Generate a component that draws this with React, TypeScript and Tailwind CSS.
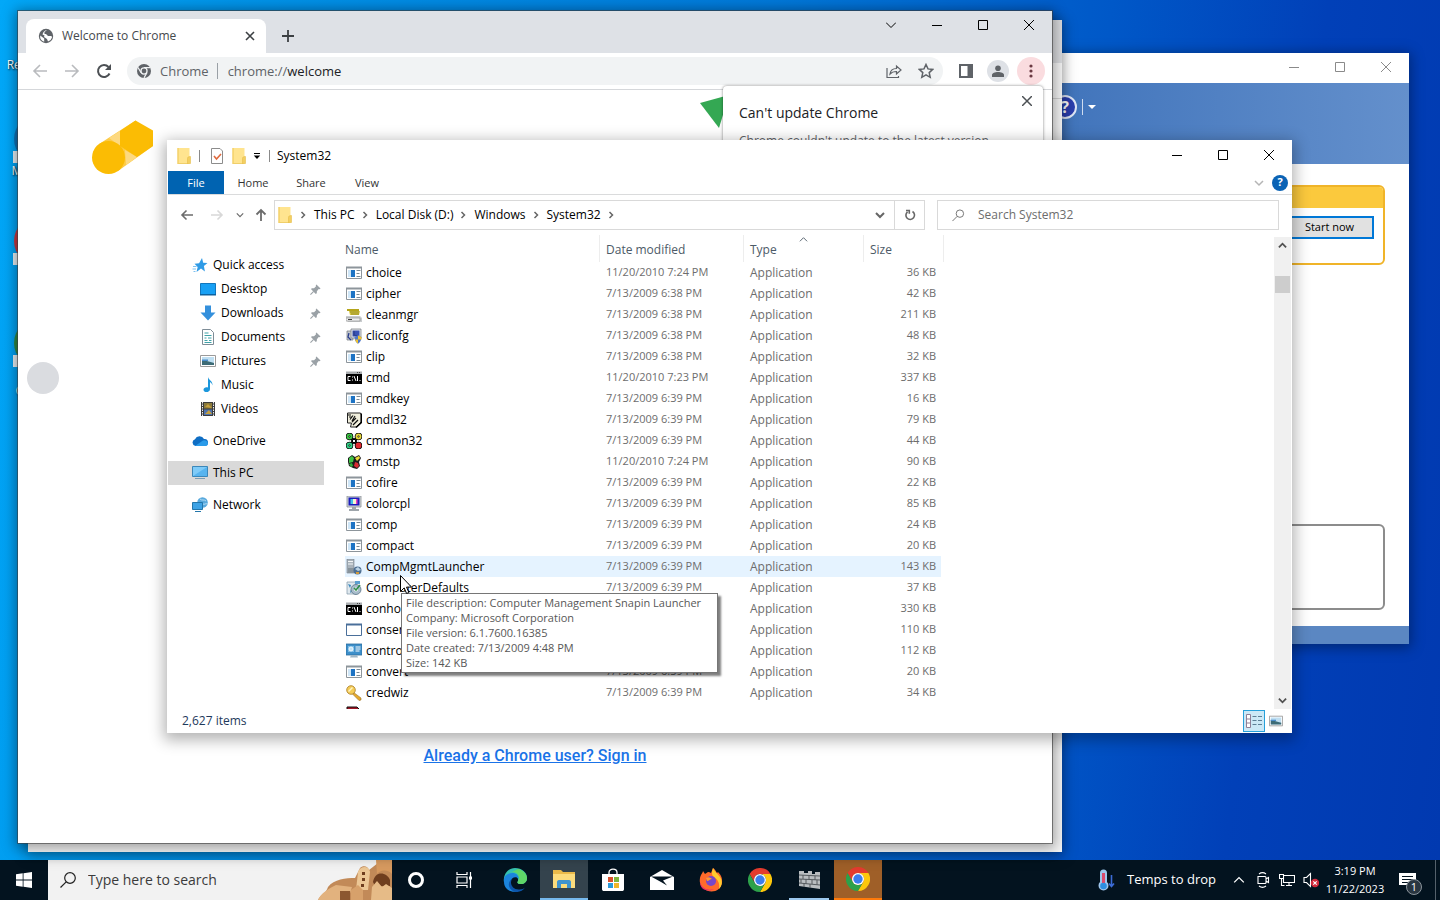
import React from 'react'

const ChromeLogo = ({ className }: { className?: string }) => (
  <svg viewBox="0 0 24 24" className={className}>
    <path d="M1.6 6A12 12 0 0 1 22.4 6H12A6 6 0 0 0 6.8 15Z" fill="#e33b2e" />
    <path d="M22.4 6A12 12 0 0 1 12 24L17.2 15A6 6 0 0 0 12 6Z" fill="#fdc70c" />
    <path d="M12 24A12 12 0 0 1 1.6 6L6.8 15A6 6 0 0 0 17.2 15Z" fill="#2da14a" />
    <circle cx="12" cy="12" r="6" fill="#fff" />
    <circle cx="12" cy="12" r="4.7" fill="#3b7ded" />
  </svg>
)

const ChromeGray = () => (
  <svg viewBox="0 0 24 24" className="size-[14px]">
    <circle cx="12" cy="12" r="12" fill="#5f6368" />
    <path d="M12 6.3H22.6M6.9 14.8L1.8 6M17.1 14.8L12 23.8" stroke="#f1f3f4" strokeWidth="2" />
    <circle cx="12" cy="12" r="5.2" fill="#5f6368" stroke="#f1f3f4" strokeWidth="2.2" />
  </svg>
)

const Folder = ({ className = 'size-4' }: { className?: string }) => (
  <svg viewBox="0 0 16 16" className={className}>
    <path d="M1.500 0h12v16h-12z" fill="#ffe48f" />
    <path d="M2 0v16" stroke="#eec756" />
    <path d="M2 15.500h10" stroke="#f0cf6a" />
    <path d="M11.500 10.500c0-1.500 1-2 3-2V15.500h-3z" fill="#f3cf62" stroke="#e3b63d" strokeWidth=".5" />
  </svg>
)

const Minimize = () => <svg viewBox="0 0 10 10" className="size-[10px]" stroke="currentColor"><path d="M0 5.500h10" /></svg>
const Maximize = () => <svg viewBox="0 0 10 10" className="size-[10px]" stroke="currentColor" fill="none"><path d="M.5.5h9v9h-9z" /></svg>
const Close = () => <svg viewBox="0 0 10 10" className="size-[10px]" stroke="currentColor"><path d="M0 0l10 10M10 0L0 10" /></svg>

const WindowButtons = ({ className = '', chevron = false }: { className?: string; chevron?: boolean }) => (
  <div className={`flex ${className}`}>
    {chevron && (
      <button aria-label="Search tabs" className="flex w-[46px] items-center justify-center">
        <svg viewBox="0 0 10 10" className="size-[10px]" stroke="currentColor" fill="none"><path d="M0 2.500l5 5 5-5" /></svg>
      </button>
    )}
    <button aria-label="Minimize" className="flex w-[46px] items-center justify-center"><Minimize /></button>
    <button aria-label="Maximize" className="flex w-[46px] items-center justify-center"><Maximize /></button>
    <button aria-label="Close" className="flex w-[46px] items-center justify-center"><Close /></button>
  </div>
)

const Chevron = ({ d, className = 'size-[10px]', width = 1.5 }: { d: string; className?: string; width?: number }) => (
  <svg viewBox="0 0 10 10" className={className} fill="none" stroke="currentColor" strokeWidth={width}><path d={d} /></svg>
)
const DOWN = 'M1 3l4 4 4-4'
const UP = 'M1 7l4-4 4 4'
const RIGHT = 'M3.500 2l3 3-3 3'

/* ---------- file list icons ---------- */

const icons: Record<string, React.ReactNode> = {
  app: (
    <>
      <path d="M.5 2.500h15v11H.5z" fill="#fff" stroke="#8d959b" />
      <path d="M0 1.500h16V3.500H0z" fill="#8d959b" />
      <path d="M2 5h7v7H2z" fill="#cfe6f7" />
      <path d="M5 5h4v7H5z" fill="#1d73c4" />
      <path d="M10.500 5.500h4M10.500 8.500h3M10.500 11.500h4" stroke="#7a8a95" />
    </>
  ),
  blank: (
    <>
      <path d="M.5 2.500h15v11H.5z" fill="#fff" stroke="#4a6f9a" />
      <path d="M0 1.500h16V3.500H0z" fill="#4a6f9a" />
    </>
  ),
  cmd: (
    <>
      <path d="M0 2h16v12H0z" fill="#000" />
      <path d="M0 1.500h16V4H0z" fill="#a9adb0" />
      <path d="M11 2.500h1M13 2.500h1" stroke="#444" />
      <path d="M4.500 6.500H2v4h2.500M6.500 6.500v1M6.500 9.500v1M8 6l2 5M11.500 6v5M13.500 10.500h1" stroke="#fff" fill="none" />
    </>
  ),
  clean: (
    <>
      <path d="M1 2h12v2H1z" fill="#b5a51c" />
      <path d="M3 4l1 4h9l1-4z" fill="#d8c840" />
      <path d="M4 5h9M5 7h8" stroke="#77701a" strokeWidth=".7" />
      <path d="M0 9h14l2 2v4H2l-2-2z" fill="#c9ccce" />
      <path d="M0 11h14v3H0z" fill="#eef0f1" stroke="#888" strokeWidth=".6" />
      <path d="M2 12.500h4" stroke="#444" />
    </>
  ),
  config: (
    <>
      <path d="M1 3h6v9H1z" fill="#c8ccd2" stroke="#70757d" strokeWidth=".7" />
      <path d="M5 1h10v9H5z" fill="#e2e5ea" stroke="#70757d" strokeWidth=".7" />
      <path d="M6.500 2.500h7v6h-7z" fill="#3852b4" />
      <path d="M3 5l-1 4 3 3M8 3v4l3 1" fill="none" stroke="#2b3f8d" strokeWidth="1.300" />
      <path d="M8.500 9l3.500-1.500L15.500 9c0 3.500-1.300 5-3.500 6.700C9.800 14 8.500 12.500 8.500 9z" fill="#4f78c9" />
      <path d="M12 7.500l3.500 1.500v2.500H12zM12 15.700v-4.200H9c.6 2 1.600 3 3 4.200z" fill="#f0c22f" />
    </>
  ),
  script: (
    <>
      <path d="M1.500 1h13l.5 2v7l-5 5H4.500l1-4h-4z" fill="#f1efdd" stroke="#222" />
      <path d="M2 3h3M3 5h3M7 3.500l-3 4M9 4L6 9M10 6l-4 4M12 8l-4 4M7 13l2-2" stroke="#111" strokeWidth="1.200" />
      <path d="M15.500 1.500v9L10 15.500" fill="none" stroke="#000" strokeWidth="1.500" />
    </>
  ),
  clover: (
    <>
      <path d="M5 5h6v6H5z" fill="#222" />
      <circle cx="3.500" cy="3.500" r="2.100" fill="none" stroke="#000" strokeWidth="3.400" />
      <circle cx="12.500" cy="3.500" r="2.100" fill="none" stroke="#000" strokeWidth="3.400" />
      <circle cx="3.500" cy="12.500" r="2.100" fill="none" stroke="#000" strokeWidth="3.400" />
      <circle cx="12.500" cy="12.500" r="2.100" fill="none" stroke="#000" strokeWidth="3.400" />
      <circle cx="3.500" cy="3.500" r="2" fill="none" stroke="#3fc447" strokeWidth="2" />
      <circle cx="12.500" cy="3.500" r="2" fill="none" stroke="#e6d63e" strokeWidth="2" />
      <circle cx="3.500" cy="12.500" r="2" fill="none" stroke="#34cf87" strokeWidth="2" />
      <circle cx="12.500" cy="12.500" r="2.200" fill="#e02a30" stroke="#e02a30" strokeWidth="1.500" />
      <path d="M6.500 6.500h3v3h-3z" fill="#fff" stroke="#000" />
    </>
  ),
  profile: (
    <>
      <path d="M2 4l4-3 3 2 4-2 2 3-2 4 1 4-3 3-4-1-4-2-1-4z" fill="#1c1c1c" />
      <path d="M3 4l3-2 2 2-1 4-4 1z" fill="#3fc447" />
      <path d="M9 4l4-2 1 2-3 3z" fill="#ecd83c" />
      <path d="M3 10l3-1 1 3-2 1z" fill="#2fae3a" />
      <path d="M9 8l3 1 1 3-2 2-3-2z" fill="#d92b32" />
    </>
  ),
  color: (
    <>
      <path d="M1 0h14v11H1z" fill="#d3d7db" stroke="#8a8f94" strokeWidth=".8" />
      <path d="M2.500 1.500h11v8h-11z" fill="#1c1dbb" />
      <path d="M4.500 3h2.500v5H4.500z" fill="#44c0e8" />
      <path d="M7 3h3v5H7z" fill="#f5f5d0" />
      <path d="M10 3h1.500v5H10z" fill="#e540c5" />
      <path d="M6 11h4v2h3v2H3v-2h3z" fill="#9ea5ab" />
    </>
  ),
  server: (
    <>
      <path d="M1 0h7v14H1z" fill="#a9b3bb" stroke="#727d86" strokeWidth=".6" />
      <path d="M2 2.500h5M2 5h5" stroke="#f4f6f7" strokeWidth="1.200" />
      <path d="M2 9h9v5H2z" fill="#88939b" />
      <circle cx="11.500" cy="11.500" r="4" fill="#4d6f92" />
      <path d="M9 10l3-2 3 3-3 1z" fill="#b9d1e4" />
      <path d="M10 13h3v2h-3z" fill="#d39a3a" />
    </>
  ),
  defaults: (
    <>
      <path d="M1 2h9v12H1z" fill="#dfe8ee" stroke="#7f95a6" strokeWidth=".7" />
      <path d="M2 4l3 1-1 3zM5 9l2 2-3 2z" fill="#3986bd" />
      <circle cx="10" cy="9.500" r="5" fill="#a8bccb" stroke="#5b7488" strokeWidth=".8" />
      <circle cx="10" cy="9.500" r="2" fill="#fff" />
      <path d="M8 8l2 2 4-5" stroke="#2f8f4a" strokeWidth="1.600" fill="none" />
      <path d="M9 1h5v3H9z" fill="#5a9fd0" />
    </>
  ),
  control: (
    <>
      <path d="M0 1h16v11H0z" fill="#3d8fca" stroke="#2b6c9e" strokeWidth=".8" />
      <path d="M2 3h6v6H2z" fill="#7dbce6" />
      <circle cx="5" cy="6" r="2" fill="#c4e4f7" stroke="#fff" strokeWidth=".8" />
      <path d="M9.500 4h5M9.500 6h5M9.500 8h4" stroke="#fff" />
      <path d="M5 12h6l1 2.500H4z" fill="#9fb6c6" />
    </>
  ),
  key: (
    <>
      <path d="M7 7l8 6v2l-2 .5-7-7z" fill="#e5a92c" stroke="#9c7327" strokeWidth=".6" />
      <circle cx="5" cy="5" r="4.300" fill="#f4cc57" stroke="#a87b24" strokeWidth=".8" />
      <path d="M2.500 6.500l4-4" stroke="#fff3c4" strokeWidth="1.500" />
    </>
  ),
  red: <path d="M1 1h10l3 3v3H1z" fill="#a01524" stroke="#111" />,
}

const files: [string, string, string, string][] = [
  ['app', 'choice', '11/20/2010 7:24 PM', '36 KB'],
  ['app', 'cipher', '7/13/2009 6:38 PM', '42 KB'],
  ['clean', 'cleanmgr', '7/13/2009 6:38 PM', '211 KB'],
  ['config', 'cliconfg', '7/13/2009 6:38 PM', '48 KB'],
  ['app', 'clip', '7/13/2009 6:38 PM', '32 KB'],
  ['cmd', 'cmd', '11/20/2010 7:23 PM', '337 KB'],
  ['app', 'cmdkey', '7/13/2009 6:39 PM', '16 KB'],
  ['script', 'cmdl32', '7/13/2009 6:39 PM', '79 KB'],
  ['clover', 'cmmon32', '7/13/2009 6:39 PM', '44 KB'],
  ['profile', 'cmstp', '11/20/2010 7:24 PM', '90 KB'],
  ['app', 'cofire', '7/13/2009 6:39 PM', '22 KB'],
  ['color', 'colorcpl', '7/13/2009 6:39 PM', '85 KB'],
  ['app', 'comp', '7/13/2009 6:39 PM', '24 KB'],
  ['app', 'compact', '7/13/2009 6:39 PM', '20 KB'],
  ['server', 'CompMgmtLauncher', '7/13/2009 6:39 PM', '143 KB'],
  ['defaults', 'ComputerDefaults', '7/13/2009 6:39 PM', '37 KB'],
  ['cmd', 'conhost', '7/13/2009 6:39 PM', '330 KB'],
  ['blank', 'consent', '7/13/2009 6:39 PM', '110 KB'],
  ['control', 'control', '7/13/2009 6:39 PM', '112 KB'],
  ['app', 'convert', '7/13/2009 6:39 PM', '20 KB'],
  ['key', 'credwiz', '7/13/2009 6:39 PM', '34 KB'],
]

/* ---------- navigation pane ---------- */

const navIcons: Record<string, React.ReactNode> = {
  star: (
    <>
      <path d="M10 1l1.200 4.800 4.300.2-3.600 3 1 5.500L9 11.500 4.500 15l1.200-5L2.500 6.800l4.600-.5z" fill="#2f9be6" />
      <path d="M1 9.500h3.500M.5 12h3.500M1.500 14.500h2" stroke="#7cc1f0" />
    </>
  ),
  desktop: (
    <>
      <path d="M.5 2.500h15v11H.5z" fill="#18a0f4" stroke="#1277bd" />
      <path d="M0 13h16v1.500H0z" fill="#0e629f" />
    </>
  ),
  down: <path d="M5 .5h6v7h4.500L8 15.500 .5 7.500H5z" fill="#3490dc" />,
  doc: (
    <>
      <path d="M2.500.5h8l3 3v12h-11z" fill="#fff" stroke="#7e8d97" />
      <path d="M4.500 4h4M4.500 6.500h7M4.500 9h2M8 9h3.500M4.500 11.500h3M9 11.500h2.500M4.500 13.500h7" stroke="#3fa2a8" />
    </>
  ),
  pic: (
    <>
      <path d="M.5 2.500h15v11H.5z" fill="#fff" stroke="#9a9a9a" />
      <path d="M2 4h12v8H2z" fill="#bfdff2" />
      <path d="M2 7c4 0 7 2 12 3v2H2z" fill="#3d6b76" />
      <path d="M2 6.500h6v1.500H2z" fill="#4b8ccb" />
    </>
  ),
  music: <path d="M8 0c.5 3 5 4 4.500 8.500-.5-2-1.500-3-2.500-3.200V12c0 4-6.500 4-6.500.8 0-2.300 2.500-3 4.500-2.300z" fill="#1c97dc" />,
  video: (
    <>
      <path d="M1 1h14v14H1z" fill="#3c3c3c" />
      <path d="M2.500 1v14M13.500 1v14" stroke="#eee" strokeDasharray="1.500 1" />
      <path d="M4 2h8v5.500H4z" fill="#8a7a3c" />
      <path d="M4 8.500h8V14H4z" fill="#5073ad" />
      <path d="M5 6l3-3 4 4zM5 13l4-4 3 4z" fill="#c6a03e" />
    </>
  ),
  cloud: (
    <>
      <path d="M3.500 13A3.500 3.500 0 0 1 3 6.200 5 5 0 0 1 12 6a3.500 3.500 0 0 1 1 7z" fill="#0f6ec4" />
      <path d="M3 13l8-5.500a3.500 3.500 0 0 1 5 3c0 1.500-1.200 2.500-2.500 2.500z" fill="#2a9bea" />
    </>
  ),
  pc: (
    <>
      <path d="M.5 1.500h15v10H.5z" fill="#57b4ef" stroke="#3b87b9" />
      <path d="M1 2h14l-14 9z" fill="#7fcbf8" />
      <path d="M3 13.500h10" stroke="#7b9db3" />
    </>
  ),
  network: (
    <>
      <circle cx="10.500" cy="5.500" r="5.300" fill="#58a9dd" />
      <path d="M8 2c2 2 4 0 6 2M11 7c1.500 1 2.500-1 4.500 0" stroke="#b5dcf4" fill="none" />
      <path d="M.5 5.500h10v7H.5z" fill="#3da3e6" stroke="#2376aa" />
      <path d="M3 14.500h6" stroke="#2376aa" />
    </>
  ),
}

const quickItems = [
  { icon: 'desktop', label: 'Desktop', pinned: true },
  { icon: 'down', label: 'Downloads', pinned: true },
  { icon: 'doc', label: 'Documents', pinned: true },
  { icon: 'pic', label: 'Pictures', pinned: true },
  { icon: 'music', label: 'Music', pinned: false },
  { icon: 'video', label: 'Videos', pinned: false },
]

const NavItem = ({ icon, label, sub = false, pinned = false, className = '' }: { icon: string; label: string; sub?: boolean; pinned?: boolean; className?: string }) => (
  <a href="#" className={`flex h-6 items-center gap-[5px] pr-[3px] ${sub ? 'pl-8' : 'pl-6'} ${className}`}>
    <svg viewBox="0 0 16 16" className="size-4 shrink-0">{navIcons[icon]}</svg>
    <span className="flex-1">{label}</span>
    {pinned && (
      <svg viewBox="0 0 12 12" className="size-[11px] text-[#9aa1a6]">
        <path d="M7 .5L11.500 5l-1 .7-1-.2L7.500 7.800 7.400 10 6.300 11 1 5.500l1.200-1 2.200 0L6.600 2.400 6.300 1.300z" fill="currentColor" />
        <path d="M4 8L.5 11.500" stroke="currentColor" strokeWidth="1.200" />
      </svg>
    )}
  </a>
)

const Explorer = () => (
  <section className="absolute top-[140px] right-[148px] bottom-[127px] left-[167px] flex flex-col bg-white pl-px text-xs text-black shadow-[0_4px_14px_3px_rgba(0,0,0,0.3)]">
    <header className="flex h-[31px] shrink-0 justify-between">
      <div className="flex items-center pl-2">
        <Folder />
        <span className="mx-[7px] h-3 w-px bg-[#8a8a8a]" />
        <svg viewBox="0 0 16 16" className="ml-[2px] size-4">
          <path d="M2.500.5h8.500l2.500 2.500v12.500h-11z" fill="#fff" stroke="#8c8c8c" />
          <path d="M5 8l2.500 3L12 6" fill="none" stroke="#e06a3e" strokeWidth="1.600" />
        </svg>
        <Folder className="ml-[6px] size-4" />
        <svg viewBox="0 0 8 8" className="mx-[6px] size-2"><path d="M1 1.500h6" stroke="#000" /><path d="M.8 3.500h6.400L4 7z" fill="#000" /></svg>
        <span className="mr-[7px] ml-[2px] h-3 w-px bg-[#8a8a8a]" />
        <h1>System32</h1>
      </div>
      <WindowButtons className="h-[30px]" />
    </header>

    <nav className="flex h-6 shrink-0 border-b border-[#dadbdc] text-[11px] text-[#333]">
      <button className="w-14 bg-[#0063b1] pt-px text-white">File</button>
      <button className="w-[58px] pt-px">Home</button>
      <button className="w-[58px] pt-px">Share</button>
      <button className="w-[54px] pt-px">View</button>
      <div className="ml-auto flex items-center gap-2 pr-1">
        <button aria-label="Expand the Ribbon" className="text-[#b5b5b5]"><Chevron d={DOWN} /></button>
        <button aria-label="Help" className="flex size-4 items-center justify-center rounded-full bg-[#0b63b5] font-bold text-white">?</button>
      </div>
    </nav>

    <div className="flex h-10 shrink-0 items-center pr-[13px]">
      <div className="flex w-[106px] items-center justify-between pr-[6px] pl-3 text-[#6c6c6c]">
        <button aria-label="Back"><svg viewBox="0 0 14 14" className="size-[14px]" fill="none" stroke="currentColor" strokeWidth="1.600"><path d="M13 7H2M6.500 2.500L2 7l4.500 4.500" /></svg></button>
        <button aria-label="Forward" className="ml-[14px] text-[#d8d8d8]"><svg viewBox="0 0 14 14" className="size-[14px]" fill="none" stroke="currentColor" strokeWidth="1.600"><path d="M1 7h11M7.500 2.500L12 7l-4.500 4.500" /></svg></button>
        <button aria-label="Recent locations" className="ml-[10px]"><Chevron d={DOWN} className="size-2" /></button>
        <button aria-label="Up" className="ml-[8px]"><svg viewBox="0 0 14 14" className="size-[14px]" fill="none" stroke="currentColor" strokeWidth="1.800"><path d="M7 13V2M2.500 6.500L7 2l4.500 4.500" /></svg></button>
      </div>
      <div className="flex h-[30px] flex-1 items-center border border-[#d9d9d9] pl-[2px]">
        <Folder />
        {['This PC', 'Local Disk (D:)', 'Windows', 'System32'].map((part) => (
          <React.Fragment key={part}>
            <span className="w-[21px] pl-[5px] text-[#666]"><Chevron d={RIGHT} /></span>
            <a href="#">{part}</a>
          </React.Fragment>
        ))}
        <span className="w-[21px] pl-[5px] text-[#666]"><Chevron d={RIGHT} /></span>
        <button aria-label="Previous locations" className="ml-auto flex h-full w-7 items-center justify-center text-[#666]"><Chevron d={DOWN} width={2} /></button>
        <button aria-label="Refresh" className="flex h-full w-[30px] items-center justify-center border-l border-[#d9d9d9] text-[#666]">
          <svg viewBox="0 0 12 12" className="size-3" fill="none" stroke="currentColor" strokeWidth="1.600"><path d="M8.500 2.500A4.300 4.300 0 1 1 3.500 2.800M2 1.500h3.300v3.300" /></svg>
        </button>
      </div>
      <label className="ml-3 flex h-[30px] w-[342px] items-center gap-[13px] border border-[#d9d9d9] pl-[14px] text-[#6d6d6d]">
        <svg viewBox="0 0 14 14" className="size-[13px]" fill="none" stroke="currentColor"><circle cx="8.500" cy="5" r="4" /><path d="M5.500 8L.5 13" /></svg>
        <input type="search" aria-label="Search System32" placeholder="Search System32" className="flex-1 outline-none placeholder:text-[#6d6d6d]" />
      </label>
    </div>

    <div className="flex min-h-0 flex-1">
      <aside className="w-[156px] shrink-0 pt-[18px]">
        <NavItem icon="star" label="Quick access" />
        {quickItems.map((item) => <NavItem key={item.label} sub {...item} />)}
        <NavItem icon="cloud" label="OneDrive" className="mt-2" />
        <NavItem icon="pc" label="This PC" className="mt-2 bg-[#d9d9d9]" />
        <NavItem icon="network" label="Network" className="mt-2" />
      </aside>

      <div className="min-w-0 flex-1 overflow-hidden pl-[21px]">
        <table className="w-[599px] table-fixed border-separate border-spacing-0 whitespace-nowrap">
          <colgroup>
            <col className="w-[255px]" />
            <col className="w-36" />
            <col className="w-[120px]" />
            <col className="w-20" />
          </colgroup>
          <thead>
            <tr className="h-[27px] text-left text-[#4c5a67] [&>th]:border-r [&>th]:border-[#ededed] [&>th]:p-0 [&>th]:pt-[3px] [&>th]:font-normal">
              <th>Name</th>
              <th><span className="pl-[6px]">Date modified</span></th>
              <th className="relative">
                <span className="pl-[6px]">Type</span>
                <Chevron d={UP} width={1} className="absolute top-0 left-[55px] size-[9px]" />
              </th>
              <th><span className="pl-[6px]">Size</span></th>
            </tr>
          </thead>
          <tbody>
            {files.map(([icon, name, date, size]) => (
              <tr key={name} className={`h-[21px] text-[11px] text-[#6d6d6d] [&>td]:p-0 ${name === 'CompMgmtLauncher' ? '[&>td]:bg-[#e5f3ff]' : ''}`}>
                <td>
                  <div className="flex h-[21px] items-center gap-[4px] pl-px text-xs text-black">
                    <svg viewBox="0 0 16 16" className="size-4">{icons[icon]}</svg>
                    {name}
                  </div>
                </td>
                <td><span className="pl-[6px]">{date}</span></td>
                <td><span className="pl-[6px] text-xs">Application</span></td>
                <td className="border-r-[3px] border-transparent bg-clip-padding text-right"><span className="pr-[5px]">{size}</span></td>
              </tr>
            ))}
            <tr className="h-[21px]">
              <td className="p-0 pl-px"><svg viewBox="0 0 16 16" className="size-4">{icons.red}</svg></td>
            </tr>
          </tbody>
        </table>
      </div>

      <div className="mt-[2px] mr-px flex w-[17px] flex-col items-center bg-[#f0f0f0] text-[#505050]">
        <button aria-label="Scroll up" className="flex h-[17px] items-center"><Chevron d={UP} width={2} className="size-[9px]" /></button>
        <div className="mt-[22px] h-[17px] w-[15px] bg-[#cdcdcd]" />
        <button aria-label="Scroll down" className="mt-auto flex h-[17px] items-center"><Chevron d={DOWN} width={2} className="size-[9px]" /></button>
      </div>
    </div>

    <footer className="flex h-6 shrink-0 items-center justify-between pr-[9px] pl-[14px] text-[#1e395b]">
      <span>2,627 items</span>
      <div className="flex items-center gap-1">
        <button aria-label="Details view" className="flex size-[22px] items-center justify-center border border-[#26a0da] bg-[#cbe8f6]">
          <svg viewBox="0 0 18 14" className="h-[14px] w-[18px]" fill="none">
            <path d="M1.500.5h4v13h-4zM1.500 5h4M1.500 9h4" fill="#fff" stroke="#8f7f96" />
            <path d="M7.500 2.500h4M13 2.500h4M7.500 6.500h4M13 6.500h4M7.500 10.500h4M13 10.500h4" stroke="#5c7f95" />
          </svg>
        </button>
        <button aria-label="Thumbnail view"><svg viewBox="0 0 16 16" className="size-[14px]">{navIcons.pic}</svg></button>
      </div>
    </footer>

    <div role="tooltip" className="absolute top-[453px] left-[234px] min-w-[317px] border border-[#767676] bg-white px-1 pt-px pb-[2px] text-[11px] leading-[15px] whitespace-nowrap text-[#575757] shadow-[3px_3px_2px_rgba(0,0,0,0.5)]">
      <p>File description: Computer Management Snapin Launcher</p>
      <p>Company: Microsoft Corporation</p>
      <p>File version: 6.1.7600.16385</p>
      <p>Date created: 7/13/2009 4:48 PM</p>
      <p>Size: 142 KB</p>
    </div>
    <svg viewBox="0 0 12 19" className="absolute top-[435px] left-[233px] h-[19px] w-3">
      <path d="M.5.5v16l3.700-3.600 2.400 5.600 2.300-1-2.400-5.400h5z" fill="#fff" stroke="#000" />
    </svg>
  </section>
)

const Chrome = () => (
  <section className="absolute top-[11px] right-[388px] bottom-[17px] left-[18px] flex flex-col bg-white shadow-[0_0_0_1px_rgba(60,60,60,0.6),0_2px_12px_3px_rgba(0,0,0,0.35)]">
    <header className="flex h-[42px] shrink-0 bg-[#dee1e6]">
      <div className="mt-2 ml-2 flex w-60 items-center gap-2 rounded-t-lg bg-white pr-[11px] pl-3">
        <svg viewBox="0 0 16 16" className="size-4">
          <circle cx="8" cy="8" r="7.200" fill="#5f6368" />
          <path d="M2.200 7.500l4 3v3.300A6 6 0 0 1 2.200 7.500zM9 2l-2.500 2v2H8l2 2h3.500l.5 1.500A6 6 0 0 1 10 13.600l-1-2.600-3-2 .5-1.500-2-1A6 6 0 0 1 9 2z" fill="#fff" />
        </svg>
        <span className="flex-1 text-xs text-[#45494d]">Welcome to Chrome</span>
        <button aria-label="Close tab" className="text-[#3c4043]"><Chevron d="M1 1l8 8M9 1L1 9" width={1.6} /></button>
      </div>
      <button aria-label="New tab" className="mt-2 ml-4 text-[#3c4043]"><Chevron d="M5 0v10M0 5h10" width={1.5} className="size-3" /></button>
      <WindowButtons chevron className="ml-auto h-7" />
    </header>

    <div className="flex h-[37px] shrink-0 items-center border-b border-[#d5d7da] pr-[7px] pl-[14px] text-sm">
      <button aria-label="Back" className="text-[#b9bbbe]"><svg viewBox="0 0 16 16" className="size-4" fill="none" stroke="currentColor" strokeWidth="1.600"><path d="M15 8H2M8 2L2 8l6 6" /></svg></button>
      <button aria-label="Forward" className="ml-4 text-[#b9bbbe]"><svg viewBox="0 0 16 16" className="size-4" fill="none" stroke="currentColor" strokeWidth="1.600"><path d="M1 8h13M8 2l6 6-6 6" /></svg></button>
      <button aria-label="Reload" className="ml-4 text-[#4c5054]"><svg viewBox="0 0 16 16" className="size-4" fill="none" stroke="currentColor" strokeWidth="2"><path d="M13.500 10.500A6 6 0 1 1 12.500 4" /><path d="M15 1v6H9z" fill="currentColor" stroke="none" /></svg></button>
      <div className="ml-[15px] flex h-7 flex-1 items-center rounded-full bg-[#f1f3f4] pr-[9px] pl-[10px] text-[13px] text-[#5f6368]">
        <ChromeGray />
        <span className="ml-[9px]">Chrome</span>
        <span className="mr-[10px] ml-2 h-4 w-px bg-[#9aa0a6]" />
        <span>chrome://<span className="text-[#202124]">welcome</span></span>
        <button aria-label="Share" className="ml-auto">
          <svg viewBox="0 0 16 16" className="size-4" fill="none" stroke="currentColor" strokeWidth="1.200"><path d="M1 5v9.500h11.500V13M4 11c.5-4 3-5.500 6.500-5.500V3L15 7l-4.500 4V8.500C7.500 8.500 5.500 9.300 4 11z" /></svg>
        </button>
        <button aria-label="Bookmark" className="ml-4">
          <svg viewBox="0 0 16 16" className="size-4" fill="none" stroke="currentColor" strokeWidth="1.500"><path d="M8 1.500l2 4.400 4.700.5-3.500 3.200 1 4.700L8 11.900l-4.200 2.400 1-4.700L1.300 6.400 6 5.900z" /></svg>
        </button>
      </div>
      <div className="ml-4 flex items-center text-[#5f6368]">
        <button aria-label="Side panel"><svg viewBox="0 0 14 14" className="size-[14px]"><path d="M1 1h12v12H1z" fill="none" stroke="currentColor" strokeWidth="2" /><path d="M8.500 1H14v12H8.500z" fill="currentColor" /></svg></button>
        <button aria-label="Profile" className="ml-[14px] flex size-[22px] items-center justify-center rounded-full bg-[#dee1e6]">
          <svg viewBox="0 0 12 12" className="size-3" fill="currentColor"><circle cx="6" cy="3.200" r="2.800" /><path d="M0 12V10c0-2 3-3 6-3s6 1 6 3v2z" /></svg>
        </button>
        <button aria-label="Menu" className="ml-2 flex size-7 items-center justify-center rounded-full bg-[#fadcdf]">
          <svg viewBox="0 0 4 14" className="h-[14px] w-1" fill="#6b3a42"><circle cx="2" cy="2" r="1.600" /><circle cx="2" cy="7" r="1.600" /><circle cx="2" cy="12" r="1.600" /></svg>
        </button>
      </div>
    </div>

    <div className="relative flex flex-1 flex-col items-center justify-end pb-[75px]">
      <svg viewBox="0 0 62 56" className="absolute top-[30px] left-[74px] h-14 w-[62px]">
        <path d="M7.500 23.700L43.500.5L61 26L25.700 51.200z" fill="#fdcb45" />
        <path d="M17 18L28 11V26zM33 30l12 7-11 8z" fill="#fdd980" />
        <circle cx="16.500" cy="37.500" r="16.500" fill="#fbbc04" />
        <path d="M43.500.5L61 10.500V26L45 37 28 26V11z" fill="#fbbc04" />
      </svg>
      <svg viewBox="0 0 32 36" className="absolute top-[4px] left-[681px] h-9 w-8"><path d="M1 9L30 1 20 34z" fill="#34a853" /></svg>
      <div className="absolute top-[272px] left-[9px] size-8 rounded-full bg-[#dadce0]" />
      <a href="#" className="font-[Roboto,sans-serif] text-base font-medium text-[#1a73e8] underline">Already a Chrome user? Sign in</a>
    </div>

    <aside className="absolute top-[75px] right-[9px] h-28 w-80 rounded-t-sm bg-white px-4 pt-[17px] shadow-[0_0_3px_rgba(0,0,0,0.5)]">
      <button aria-label="Close" className="absolute top-[10px] right-[11px] text-[#4c5054]"><Chevron d="M0 0l10 10M10 0L0 10" width={1.5} /></button>
      <h2 className="text-sm leading-5 text-[#202124]">Can't update Chrome</h2>
      <p className="mt-2 text-xs leading-5 text-[#5f6368]">Chrome couldn't update to the latest version</p>
    </aside>
  </section>
)

const SecurityEssentials = () => (
  <section className="absolute top-[53px] right-[31px] bottom-[216px] left-2/5 flex flex-col bg-white text-xs shadow-[0_2px_12px_2px_rgba(0,0,0,0.35)]">
    <header className="flex h-[30px] shrink-0 justify-end text-[#8a8a8a]"><WindowButtons className="h-7" /></header>
    <div className="h-[81px] shrink-0 bg-linear-to-r from-[#3a6fb8] from-50% to-[#6490cc] pr-[313px] pt-3 text-white">
      <div className="flex items-center justify-end gap-[5px]">
        <button aria-label="Help" className="flex size-6 items-center justify-center rounded-full border-2 border-[#dfe7f6] bg-[#2b3fae] text-base font-bold">?</button>
        <span className="h-4 w-px bg-[#cfdcf0]" />
        <svg viewBox="0 0 8 8" className="size-2"><path d="M0 2h8L4 6z" fill="#fff" /></svg>
      </div>
    </div>
    <div className="flex flex-1 flex-col justify-between px-6 pt-[21px] pb-4">
      <div className="h-20 overflow-hidden rounded-md border-2 border-[#f0b429]">
        <div className="h-[21px] bg-[#fbc93d]" />
        <div className="flex justify-end pt-2 pr-[9px]">
          <button className="h-[23px] w-[89px] border-2 border-[#0078d7] bg-[#e1e1e1] text-[11px]">Start now</button>
        </div>
      </div>
      <div className="h-[86px] rounded-md border-2 border-[#8c8c8c]" />
    </div>
    <footer className="h-[18px] shrink-0 bg-[#5b87c2]" />
  </section>
)

const DesktopIcon = ({ lines, color }: { lines: string[]; color: string }) => (
  <a href="#" className="flex flex-col items-center">
    <span className={`relative size-12 rounded-full ${color}`}><span className="absolute bottom-0 -left-px size-3 bg-[#eaf1f5]" /></span>
    {lines.map((line) => <span key={line} className="leading-4">{line}</span>)}
  </a>
)

/* ---------- taskbar ---------- */

const TaskButton = ({ label, className = '', children }: { label: string; className?: string; children: React.ReactNode }) => (
  <button aria-label={label} className={`flex h-10 w-12 shrink-0 items-center justify-center ${className}`}>{children}</button>
)

const Taskbar = () => (
  <footer className="flex h-10 shrink-0 bg-[#03131f] text-white">
    <TaskButton label="Start"><svg viewBox="0 0 16 16" className="size-4" fill="#fff"><path d="M0 2.300L6.700 1.300v6.300H0zM7.500 1.200L16 0v7.600H7.500zM0 8.400h6.700v6.300L0 13.800zM7.500 8.400H16V16l-8.500-1.200z" /></svg></TaskButton>
    <label className="flex w-[344px] items-center bg-[#f2f2f2] pl-3 text-[#333]">
      <svg viewBox="0 0 16 16" className="size-4" fill="none" stroke="#222" strokeWidth="1.200"><circle cx="10" cy="6" r="5.300" /><path d="M6.200 9.800L.5 15.500" /></svg>
      <input type="search" aria-label="Type here to search" placeholder="Type here to search" className="ml-3 w-0 flex-1 text-sm outline-none placeholder:text-[#3b3b3b]" />
      <svg viewBox="0 0 74 40" className="h-10 w-[74px]">
        <path d="M0 40c2-5 8-6 10-13 6-8 18-9 27-9L42 8c3-3 8-2 9 2l9-7 2-3h12v40z" fill="#c28a58" />
        <path d="M0 40c3-7 10-11 18-15l16 2-4 13z" fill="#e2b27e" />
        <path d="M58 0h16v14c-5-5-12-4-15 0z" fill="#d79a5f" />
        <path d="M40 12c2-6 11-7 12 0l-2 18H38z" fill="#ecc795" />
        <path d="M44 12h3v3h-3zM44 18h3v3h-3zM43 24h3v3h-3zM55 22c2-12 14-10 17-2v6H57z" fill="#6f3e1e" />
        <path d="M54 27l5-6 5 6 4-3 6 4v12H53z" fill="#e6bb87" />
        <path d="M22 31h10v9H22z" fill="#8c5730" />
        <path d="M33 30l7-5 5 5v10H33z" fill="#d7a16b" />
      </svg>
    </label>
    <TaskButton label="Cortana"><span className="size-4 rounded-full border-[3px] border-white" /></TaskButton>
    <TaskButton label="Task View">
      <svg viewBox="0 0 16 16" className="size-4" fill="none" stroke="#fff" strokeWidth="1.200"><path d="M1 0v2.500h10V0M1 16v-2.500h10V16M1 5h10v6H1zM14.500 0v16" /><path d="M13 4.500h3v3h-3z" fill="#fff" stroke="none" /></svg>
    </TaskButton>
    <div className="ml-[3px] flex gap-px">
      <TaskButton label="Edge">
        <svg viewBox="0 0 24 24" className="size-6">
          <path d="M1 14C0 6 5 0 12 0c7 0 12 4.500 12 10 0 4-3 6-6 6-2.500 0-4-1-3.500-2C16 11 14.500 8 11 8c-5 0-8 3-10 6z" fill="#35c1b0" />
          <path d="M15 1c5 1 9 5 9 9 0 4-3 6-6 6-2.500 0-4-1-3.500-2C18 9 15 4 9 4z" fill="#5fd668" />
          <path d="M1 14C0 9 4 5 9.500 5c4 0 6.500 3 6 6C14 8 8 8.500 7.500 14c-.3 5 4 9.500 8 9.300C8 25.500 1 21 1 14z" fill="#1b84dc" />
          <path d="M9 11c-3 5 1 11 7.500 10.500 2.500 0 4.500-1 5.500-2-2 3.500-7 5.500-11 4C5 21 4 14 9 11z" fill="#0c55ab" />
        </svg>
      </TaskButton>
      <TaskButton label="File Explorer" className="border-b-2 border-[#76b9ed] bg-[#34434d]">
        <svg viewBox="0 0 24 20" className="h-5 w-6"><path d="M1 1h8l2 2h12v16H1z" fill="#e9b94a" /><path d="M1 5h22v14H1z" fill="#fbdb7c" /><path d="M5 19v-6c0-1 .6-2 2-2h10c1.400 0 2 1 2 2v6h-4v-4H9v4z" fill="#3f93cf" /></svg>
      </TaskButton>
      <TaskButton label="Microsoft Store">
        <svg viewBox="0 0 24 24" className="size-6"><path d="M8 7V4.500C8 0 16 0 16 4.500V7" fill="none" stroke="#fff" strokeWidth="1.300" /><path d="M1 6h22v15c0 1.500-.8 2-2 2H3c-1.200 0-2-.5-2-2z" fill="#fff" /><path d="M7 9h5v5H7z" fill="#d9512c" /><path d="M13 9h5v5h-5z" fill="#7fb53c" /><path d="M7 15h5v5H7z" fill="#2b9ad9" /><path d="M13 15h5v5h-5z" fill="#f2b527" /></svg>
      </TaskButton>
      <TaskButton label="Mail">
        <svg viewBox="0 0 24 20" className="h-5 w-6"><path d="M0 7L12 0l12 7v13H0z" fill="#fff" /><path d="M1 6.500h22L13 10.500l4 5-6-3.500z" fill="#03131f" /></svg>
      </TaskButton>
      <TaskButton label="Firefox">
        <svg viewBox="0 0 24 24" className="size-6">
          <path d="M2 7c1-2 2-3 2-4l2 3 3-2c1 0 2 .5 3 1l2-5c3 2 3 4 4 5l1-1c3 3 4.500 6 4 11-1 5-5 8.500-10.500 8.500S1 19 .8 13.500C.7 11 1 9 2 7z" fill="#ff6a2b" />
          <path d="M14 0c2 4 5 6 7 9 3 4 2 9-1 12 1-6-1-9-5-12-3-2-2-6-1-9z" fill="#ffcb2e" />
          <path d="M1 14c2 7 8 9 14 7-3 2.500-14 3-14-7z" fill="#e8286b" />
          <circle cx="12" cy="13" r="5" fill="#7747c8" />
          <path d="M7 10c3-2 5 0 6 1-2 0-3 2-5 2z" fill="#ff9833" />
        </svg>
      </TaskButton>
      <TaskButton label="Google Chrome"><ChromeLogo className="size-6" /></TaskButton>
      <TaskButton label="Security" className="relative">
        <svg viewBox="0 0 22 20" className="h-5 w-[22px]">
          <path d="M1 1h5v2h4V1h4v3h3V2h5v17L1 16z" fill="#b9bdc0" />
          <path d="M1 5l21 1M1 9l21 1M1 13l21 2M5 5v4M11 5v4M17 6v4M3 9v4M8 9v5M14 10v4M19 10v5M6 13v4M12 14v4" stroke="#565b5f" />
        </svg>
        <span className="absolute inset-x-1 bottom-0 h-[2px] bg-[#9cc8ee]" />
      </TaskButton>
      <TaskButton label="Chrome window" className="border-b-2 border-[#ff7a0a] bg-[#9f5f28]"><ChromeLogo className="size-6" /></TaskButton>
    </div>

    <div className="ml-auto flex items-center">
      <button className="flex items-center gap-3 text-[13px]">
        <svg viewBox="0 0 18 24" className="h-6 w-[18px]">
          <path d="M3 5a3.500 3.500 0 0 1 7 0v9a5 5 0 1 1-7 0z" fill="#9fc6ec" />
          <path d="M6.500 5v11" stroke="#dc4a6c" strokeWidth="3" />
          <circle cx="6.500" cy="18" r="3.300" fill="#2d8ee0" />
          <path d="M14.500 7v11M12 15.500l2.500 3 2.500-3" stroke="#3b6bd6" strokeWidth="1.600" fill="none" />
        </svg>
        Temps to drop
      </button>
      <div className="ml-[17px] flex items-center gap-2">
        <button aria-label="Show hidden icons"><Chevron d={UP} width={1.1} className="size-3" /></button>
        <svg viewBox="0 0 16 16" className="ml-[2px] size-4" fill="none" stroke="#fff" strokeWidth="1.100"><path d="M3 4.500h7a1 1 0 0 1 1 1v5a1 1 0 0 1-1 1H3zM11 7l2.500-1.500v5L11 9M4 2c2-1.500 5-1.500 7 0M4 14c2 1.500 5 1.500 7 0" /></svg>
        <svg viewBox="0 0 16 16" className="size-4" fill="none" stroke="#fff" strokeWidth="1.100"><path d="M4.500 3.500h11v7h-11zM10 10.500v3M7 13.500h6M.5 2.500h4v4h-4zM2.500 6.500v7h3" /></svg>
        <svg viewBox="0 0 16 16" className="size-4" fill="none" stroke="#fff" strokeWidth="1.100"><path d="M1 5.500h2.500l4-4v13l-4-4H1z" /><circle cx="12" cy="11" r="4.200" fill="#d42a3c" stroke="none" /><path d="M10.300 9.300l3.400 3.400M13.700 9.300l-3.400 3.400" /></svg>
      </div>
      <time className="ml-[5px] flex w-[62px] flex-col items-center text-[11px] leading-[18px] whitespace-nowrap"><span>3:19 PM</span><span>11/22/2023</span></time>
      <button aria-label="Notifications" className="relative ml-[11px] size-6">
        <svg viewBox="0 0 18 18" className="mt-[2px] ml-[2px] size-[18px]"><path d="M0 1h17v12h-5v4l-4-4H0z" fill="#fff" /><path d="M3 4.500h11M3 7.500h11M3 10.500h6" stroke="#03131f" strokeWidth="1.200" /></svg>
        <span className="absolute top-[11px] left-[9px] flex size-4 items-center justify-center rounded-full border border-[#8b949b] bg-[#2a3641] text-[11px]">1</span>
      </button>
      <span className="mr-1 ml-[14px] h-10 w-px bg-[#55616b]" />
    </div>
  </footer>
)

export default function App() {
  return (
    <div className="flex h-screen flex-col overflow-hidden font-['Open_Sans','Noto_Sans',sans-serif]">
      <main className="relative flex-1 bg-[linear-gradient(97deg,#02a8f8_0%,#0093e8_15%,#0078d8_50%,#0058c8_72%,#0140b8_86%,#0139b0_100%)]">
        <div className="flex w-[76px] flex-col gap-[22px] pt-[9px] text-xs text-white [text-shadow:1px_1px_2px_#000]">
          <DesktopIcon lines={['Recycle Bin']} color="bg-transparent [&>span]:hidden" />
          <div className="mt-5"><DesktopIcon lines={['Microsoft', 'Edge']} color="bg-[#1173b8]" /></div>
          <DesktopIcon lines={['Firefox']} color="bg-[#c93a45]" />
          <div className="mt-4"><DesktopIcon lines={['Google', 'Chrome']} color="bg-[#2f8c46]" /></div>
        </div>
        <SecurityEssentials />
        <section className="absolute top-5 right-[378px] bottom-2 left-7 bg-[#f4f4f4] shadow-[0_2px_12px_2px_rgba(0,0,0,0.35)]">
          <div className="h-[43px] bg-[#dadbde]" />
          <div className="h-9 border-b border-[#d0d0d0]" />
        </section>
        <Chrome />
        <Explorer />
      </main>
      <Taskbar />
    </div>
  )
}
